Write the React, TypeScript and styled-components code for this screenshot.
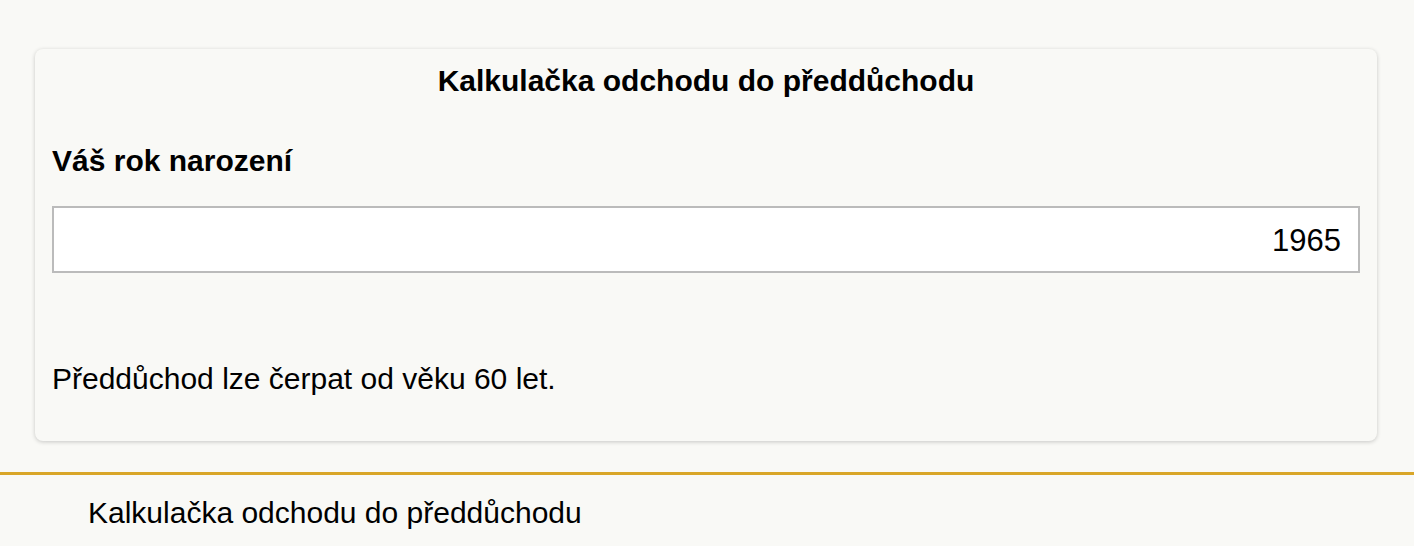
import React, { useState } from "react";
import styled, { createGlobalStyle } from "styled-components";

const GlobalStyle = createGlobalStyle`
  html, body {
    margin: 0;
    padding: 0;
    background: #f9f9f6;
    font-family: "Liberation Sans", Arial, sans-serif;
    color: #000;
  }
`;

const Page = styled.div`
  width: 1414px;
  min-height: 546px;
  overflow: hidden;
`;

const Card = styled.section`
  margin: 49px 37px 0 35px;
  padding: 15px 17px 45px 17px;
  background: #f9f9f6;
  border-radius: 8px;
  box-shadow: 0 1px 4px rgba(0, 0, 0, 0.2);
`;

const Title = styled.h2`
  margin: 0;
  font-size: 30px;
  font-weight: 700;
  text-align: center;
  line-height: 34px;
`;

const Label = styled.label`
  display: block;
  margin-top: 46px;
  font-size: 30px;
  font-weight: 700;
  line-height: 34px;
`;

const YearInput = styled.input`
  display: block;
  box-sizing: border-box;
  width: 100%;
  height: 67px;
  margin-top: 28px;
  padding: 2px 17px 0 17px;
  border: 2px solid #bbbbbb;
  background: #fff;
  font-family: "Liberation Sans", Arial, sans-serif;
  font-size: 31px;
  text-align: right;
  color: #000;
  outline: none;
`;

const Result = styled.p`
  margin: 89px 0 0 0;
  font-size: 30px;
  line-height: 34px;
`;

const Footer = styled.footer`
  margin-top: 31px;
  border-top: 3px solid #d9a628;
  padding: 21px 0 0 88px;
  font-size: 30px;
  line-height: 34px;
`;

const App: React.FC = () => {
  const [year, setYear] = useState("1965");

  return (
    <Page>
      <GlobalStyle />
      <Card>
        <Title>Kalkulačka odchodu do předdůchodu</Title>
        <Label htmlFor="rok">Váš rok narození</Label>
        <YearInput
          id="rok"
          type="text"
          value={year}
          onChange={e => setYear(e.target.value)}
        />
        <Result>Předdůchod lze čerpat od věku 60 let.</Result>
      </Card>
      <Footer>Kalkulačka odchodu do předdůchodu</Footer>
    </Page>
  );
};

export default App;
